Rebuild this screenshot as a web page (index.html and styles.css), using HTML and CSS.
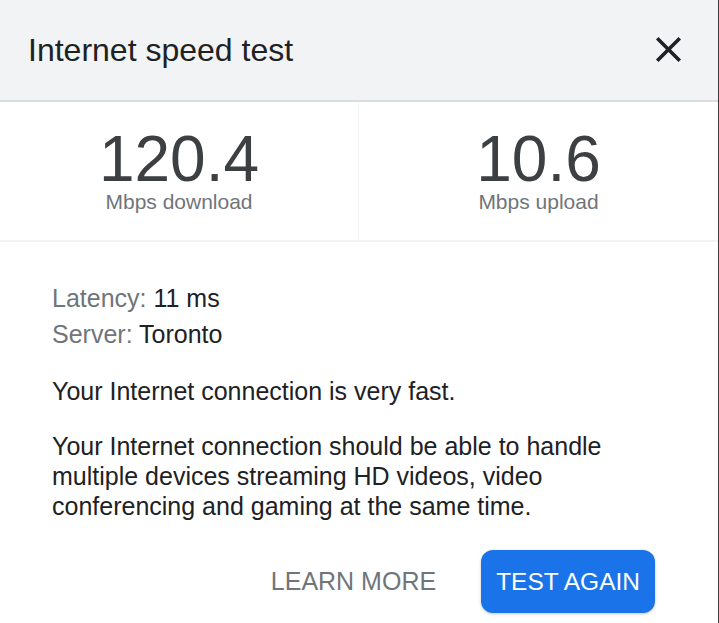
FILE: index.html
```html
<!DOCTYPE html>
<html lang="en">
<head>
<meta charset="utf-8">
<title>Internet speed test</title>
<link rel="stylesheet" href="styles.css">
</head>
<body>
<div class="dialog">
  <header class="header">
    <h1 class="title">Internet speed test</h1>
    <button class="close" aria-label="Close">
      <svg viewBox="0 0 24 24" width="43" height="43"><path d="M19 6.41L17.59 5 12 10.59 6.41 5 5 6.41 10.59 12 5 17.59 6.41 19 12 13.41 17.59 19 19 17.59 13.41 12z" fill="#202124"/></svg>
    </button>
  </header>
  <section class="stats">
    <div class="stat">
      <div class="num">120.4</div>
      <div class="unit">Mbps download</div>
    </div>
    <div class="stat">
      <div class="num">10.6</div>
      <div class="unit">Mbps upload</div>
    </div>
  </section>
  <section class="details">
    <div class="info">
      <div class="row"><span class="key">Latency:</span> 11 ms</div>
      <div class="row"><span class="key">Server:</span> Toronto</div>
    </div>
    <p class="para">Your Internet connection is very fast.</p>
    <p class="para">Your Internet connection should be able to handle multiple devices streaming HD videos, video conferencing and gaming at the same time.</p>
  </section>
  <div class="actions">
    <button class="btn btn-text">LEARN MORE</button>
    <button class="btn btn-primary">TEST AGAIN</button>
  </div>
</div>
</body>
</html>
```
FILE: styles.css
```css
html, body {
  margin: 0;
  padding: 0;
  background: #ffffff;
}
body {
  font-family: "Liberation Sans", Arial, sans-serif;
  color: #202124;
}
.dialog {
  width: 718px;
  height: 623px;
  border-right: 1px solid #3a3a3a;
  display: flex;
  flex-direction: column;
  overflow: hidden;
}
.header {
  box-sizing: border-box;
  background: #f1f3f4;
  border-bottom: 2px solid #dadce0;
  height: 102px;
  flex: none;
  display: flex;
  align-items: center;
  justify-content: space-between;
  padding: 0 28px 1px 28px;
}
.title {
  margin: 0;
  font-size: 32px;
  font-weight: 400;
  line-height: 40px;
  color: #202124;
}
.close {
  border: 0;
  background: none;
  padding: 0;
  width: 43px;
  height: 43px;
  display: flex;
  cursor: pointer;
}
.stats {
  display: grid;
  grid-template-columns: 1fr 1fr;
  border-bottom: 2px solid #f1f3f4;
}
.stat {
  text-align: center;
  padding: 26px 0 26px;
}
.stat:first-child {
  border-right: 1px solid #f1f3f4;
}
.num {
  font-size: 64px;
  line-height: 62px;
  color: #3c4043;
}
.unit {
  font-size: 21px;
  line-height: 24px;
  color: #70757a;
}
.details {
  padding: 38px 52px 0 52px;
  font-size: 25px;
}
.info {
  line-height: 36px;
}
.key {
  color: #70757a;
}
.para {
  margin: 24px 0 0 0;
  line-height: 30px;
}
.para + .para {
  margin-top: 25px;
}
.actions {
  display: flex;
  justify-content: flex-end;
  gap: 30px;
  padding: 29px 63px 0 0;
}
.btn {
  font-family: "Liberation Sans", Arial, sans-serif;
  font-size: 25px;
  border: 0;
  height: 63px;
  padding: 0 15px;
  border-radius: 12px;
  background: none;
  cursor: pointer;
}
.btn-text {
  color: #70757a;
}
.btn-primary {
  background: #1a73e8;
  color: #ffffff;
  font-size: 24.5px;
  box-shadow: 0 1px 3px rgba(60, 64, 67, 0.3);
}
```
